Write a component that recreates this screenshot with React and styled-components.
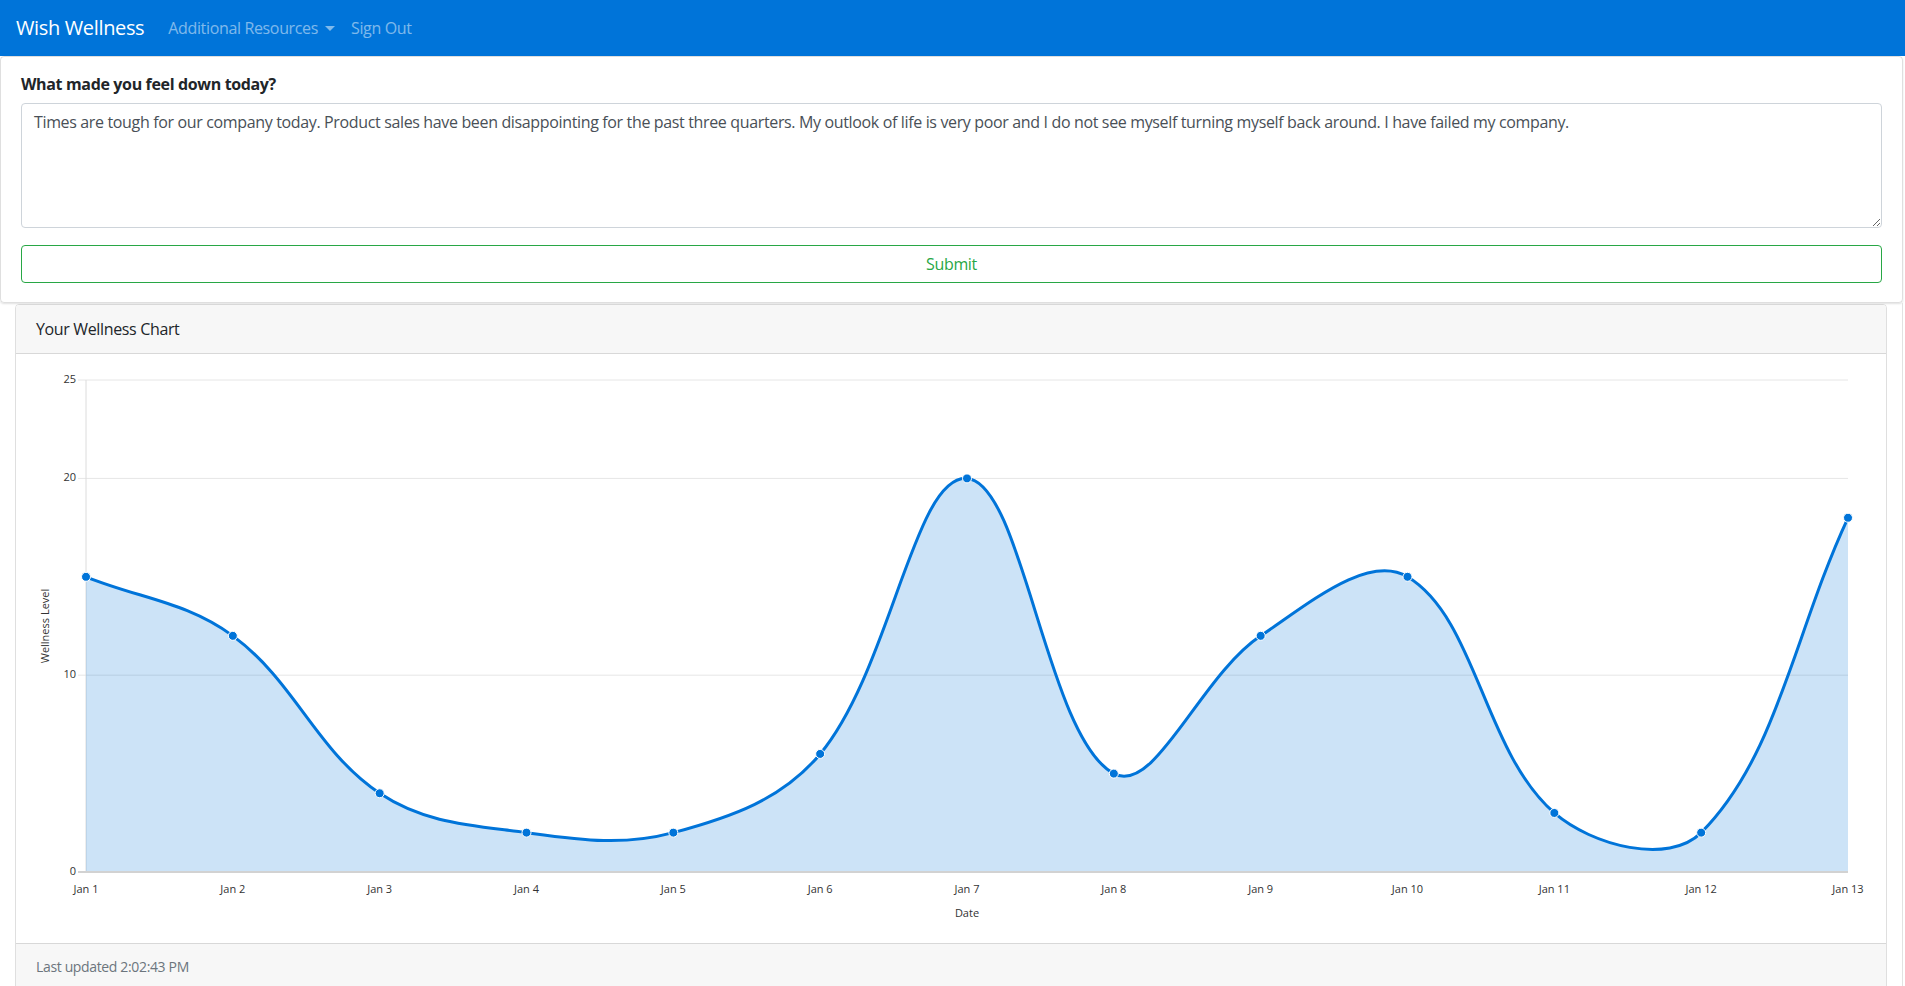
import styled, { createGlobalStyle } from "styled-components"

const GlobalStyle = createGlobalStyle`
  * { box-sizing: border-box; }
  html, body {
    margin: 0;
    padding: 0;
    background: #fff;
    overflow: hidden;
  }
  body {
    font-family: "Open Sans", "Noto Sans", Arial, sans-serif;
    font-size: 16px;
    line-height: 1.5;
    letter-spacing: -0.022em;
    color: #212529;
  }
`

const entryText = "Times are tough for our company today. Product sales have been disappointing for the past three quarters. My outlook of life is very poor and I do not see myself turning myself back around. I have failed my company."

const wellness = [15, 12, 4, 2, 2, 6, 20, 5, 12, 15, 3, 2, 18]

export default function App(){
    return(
        <>
            <GlobalStyle />
            <Navbar>
                <Brand href="#">Wish Wellness</Brand>
                <NavLink href="#" dropdown>Additional Resources</NavLink>
                <NavLink href="#">Sign Out</NavLink>
            </Navbar>

            <EntryCard>
                <Label htmlFor="entry">What made you feel down today?</Label>
                <EntryInput id="entry" defaultValue={entryText} />
                <SubmitButton type="button">Submit</SubmitButton>
            </EntryCard>

            <ChartSection>
                <ChartCard>
                    <CardHeader>Your Wellness Chart</CardHeader>
                    <CardBody>
                        <WellnessChart values={wellness} />
                    </CardBody>
                    <CardFooter>Last updated 2:02:43 PM</CardFooter>
                </ChartCard>
            </ChartSection>
        </>
    )
}

// chart geometry, in svg pixels
const W = 1870
const H = 590
const PLOT = { left: 70, right: 1832, top: 26, bottom: 518 }
const MAX = 25
const TICKS = [0, 10, 20, 25]

function splinePath(points, t = 0.4){
    // chart.js style control points
    const ctrl = points.map((cur, i) => {
        const prev = points[i - 1] || cur
        const next = points[i + 1] || cur
        const d01 = Math.hypot(cur.x - prev.x, cur.y - prev.y)
        const d12 = Math.hypot(next.x - cur.x, next.y - cur.y)
        const sum = d01 + d12 || 1
        const fa = t * d01 / sum
        const fb = t * d12 / sum
        return {
            inX: cur.x - fa * (next.x - prev.x),
            inY: cur.y - fa * (next.y - prev.y),
            outX: cur.x + fb * (next.x - prev.x),
            outY: cur.y + fb * (next.y - prev.y),
        }
    })
    let d = `M${points[0].x},${points[0].y}`
    for (let i = 1; i < points.length; i++){
        const a = ctrl[i - 1]
        const b = ctrl[i]
        d += ` C${a.outX},${a.outY} ${b.inX},${b.inY} ${points[i].x},${points[i].y}`
    }
    return d
}

function WellnessChart({ values }){
    const step = (PLOT.right - PLOT.left) / (values.length - 1)
    const yAt = v => PLOT.bottom - v * (PLOT.bottom - PLOT.top) / MAX
    const points = values.map((v, i) => ({ x: PLOT.left + i * step, y: yAt(v) }))
    const line = splinePath(points, 0.37)
    const area = `${line} L${PLOT.right},${PLOT.bottom} L${PLOT.left},${PLOT.bottom} Z`

    return(
        <ChartSvg viewBox={`0 0 ${W} ${H}`}>
            {TICKS.filter(t => t > 0).map(t => (
                <GridLine key={t} x1={PLOT.left - 8} x2={PLOT.right} y1={yAt(t)} y2={yAt(t)} />
            ))}
            <AxisLine x1={PLOT.left} x2={PLOT.left} y1={PLOT.top} y2={PLOT.bottom} />

            <Area d={area} />

            <BaseLine x1={PLOT.left - 8} x2={PLOT.right} y1={PLOT.bottom} y2={PLOT.bottom} />

            {TICKS.map(t => (
                <TickLabel key={t} x={PLOT.left - 10} y={yAt(t)} textAnchor="end" dominantBaseline="middle">{t}</TickLabel>
            ))}
            {values.map((_, i) => (
                <TickLabel key={i} x={PLOT.left + i * step} y={PLOT.bottom + 18} textAnchor="middle" dominantBaseline="middle">
                    Jan {i + 1}
                </TickLabel>
            ))}

            <TickLabel x={(PLOT.left + PLOT.right) / 2} y={PLOT.bottom + 42} textAnchor="middle" dominantBaseline="middle">Date</TickLabel>
            <TickLabel
                x={30}
                y={(PLOT.top + PLOT.bottom) / 2}
                textAnchor="middle"
                dominantBaseline="middle"
                transform={`rotate(-90 30 ${(PLOT.top + PLOT.bottom) / 2})`}
            >
                Wellness Level
            </TickLabel>

            <Line d={line} />
            {points.map((p, i) => (
                <Dot key={i} cx={p.x} cy={p.y} r="4.5" />
            ))}
        </ChartSvg>
    )
}

const Navbar = styled.nav`
    display: flex;
    align-items: center;
    height: 56px;
    padding: 0 16px;
    background: #0074d9;
`

const Brand = styled.a`
    color: #fff;
    font-size: 20px;
    line-height: 30px;
    margin-right: 16px;
    text-decoration: none;
`

const NavLink = styled.a`
    display: flex;
    align-items: center;
    padding: 8px;
    color: rgba(255, 255, 255, 0.5);
    text-decoration: none;

    ${props => props.dropdown && `
        &::after {
            content: "";
            margin-left: 7px;
            border-top: 5px solid;
            border-left: 5px solid transparent;
            border-right: 5px solid transparent;
        }
    `}
`

const EntryCard = styled.section`
    margin-right: 2px;
    padding: 15px 20px 19px;
    border: 1px solid rgba(0, 0, 0, 0.125);
    border-radius: 4px;
    box-shadow: 0 1px 2px rgba(0, 0, 0, 0.12);
`

const Label = styled.label`
    display: block;
    margin-bottom: 7px;
    font-weight: 700;
    line-height: 24px;
`

const EntryInput = styled.textarea`
    display: block;
    width: 100%;
    height: 125px;
    padding: 6px 12px;
    font: inherit;
    letter-spacing: inherit;
    line-height: 1.5;
    color: #495057;
    border: 1px solid #ced4da;
    border-radius: 4px;
    resize: vertical;
    outline: none;
`

const SubmitButton = styled.button`
    display: block;
    width: 100%;
    height: 38px;
    margin-top: 17px;
    font: inherit;
    letter-spacing: inherit;
    color: #28a745;
    background: transparent;
    border: 1px solid #28a745;
    border-radius: 4px;
    cursor: pointer;
`

const ChartSection = styled.div`
    margin-right: 2px;
    padding: 1px 15px 0;
    border-right: 1px solid #e2e2e2;
`

const ChartCard = styled.div`
    border: 1px solid rgba(0, 0, 0, 0.125);
    border-radius: 4px;
    overflow: hidden;
`

const CardHeader = styled.div`
    padding: 12px 20px;
    line-height: 24px;
    background: #f7f7f7;
    border-bottom: 1px solid rgba(0, 0, 0, 0.125);
`

const CardBody = styled.div`
    height: 589px;
`

const CardFooter = styled.div`
    padding: 12px 20px;
    font-size: 14px;
    line-height: 21px;
    color: #6c757d;
    background: #f7f7f7;
    border-top: 1px solid rgba(0, 0, 0, 0.125);
`

const ChartSvg = styled.svg`
    display: block;
    width: 100%;
    height: auto;
    font-family: "Open Sans", "Noto Sans", Arial, sans-serif;
    letter-spacing: 0;
`

const GridLine = styled.line`
    stroke: #e6e6e6;
    stroke-width: 1;
`

const AxisLine = styled.line`
    stroke: #dcdcdc;
    stroke-width: 1;
`

const BaseLine = styled.line`
    stroke: #d2d2d2;
    stroke-width: 2;
`

const Area = styled.path`
    fill: rgba(0, 116, 217, 0.2);
    stroke: none;
`

const Line = styled.path`
    fill: none;
    stroke: #0074d9;
    stroke-width: 3;
`

const Dot = styled.circle`
    fill: #0074d9;
    stroke: #fff;
    stroke-width: 1;
`

const TickLabel = styled.text`
    font-size: 11px;
    fill: #333;
`
